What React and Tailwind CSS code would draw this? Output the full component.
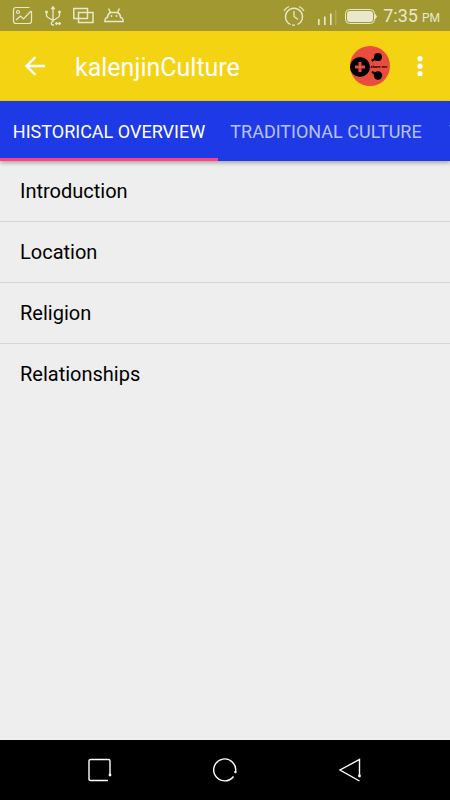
import React from "react";

const topics = ["Introduction", "Location", "Religion", "Relationships"];

function StatusBar() {
  return (
    <div className="flex h-[31px] shrink-0 items-center justify-between bg-[#a19832] pr-2.5 pl-3 text-[#e9e8cb]">
      <div className="flex items-center gap-2.5">
        <svg width="21" height="20" viewBox="0 0 21 20" fill="none" stroke="currentColor" strokeWidth="1.2">
          <path d="M17.500 1.500H4Q1.500 1.500 1.500 4V15Q1.500 17.500 4 17.500H17Q19.500 17.500 19.500 15V5" />
          <circle cx="6" cy="6" r="1.500" />
          <path d="M4 14L8.500 10L11.500 13L19 5" />
        </svg>
        <svg width="20" height="22" viewBox="0 0 20 22" fill="none" stroke="currentColor" strokeWidth="1.3">
          <path d="M10 3V16M3.500 8V10Q3.500 12 5 12.500L10 15.500L15 12.500Q16.500 12 16.500 10V8" />
          <path d="M8 4L10 1L12 4ZM2.500 6H4.500V8H2.500ZM15.500 6H17.500V8H15.500Z" fill="currentColor" strokeWidth="0.6" />
          <path d="M10.500 16.500H9.500Q7 18.500 9.500 20H11M12 18.500H18M13.500 17V20M16.500 17V20" />
        </svg>
        <svg width="21" height="20" viewBox="0 0 21 20" fill="none" stroke="currentColor" strokeWidth="1.500">
          <path d="M.8 2.500H14.500V12.500H.8Z" />
          <path d="M5.500 6.500H20V16.500H5.500Z" />
        </svg>
        <svg width="20" height="20" viewBox="0 0 20 20" fill="none" stroke="currentColor" strokeWidth="1.400">
          <path d="M4.500 2.500L6.500 6.500H13.500L15.500 2.500" />
          <path d="M6.500 6.500Q3.500 8 3.500 11.500Q1 11.500 .8 15.500H19.200Q19 11.500 16.500 11.500Q16.500 8 13.500 6.500" />
          <path d="M7.500 9V11M12.500 9V11" />
        </svg>
      </div>
      <div className="flex items-center">
        <svg className="mr-3" width="22" height="22" viewBox="0 0 22 22" fill="none" stroke="currentColor" strokeWidth="1.3">
          <path d="M7.500 19.500A8.500 8.500 0 1 1 14.500 19.500M9 20.200H12" />
          <path d="M11 6V11.500L15 14.500M1 6Q2.500 3 6 1.500M16 1.500Q19.500 3 21 6" />
        </svg>
        <svg className="mr-2" width="20" height="18" viewBox="0 0 20 18" fill="currentColor">
          <path d="M1 12H2.600V18H1ZM7 9.500H8.600V18H7ZM13 6.500H14.600V18H13Z" />
          <path d="M18 3H19.500V18H18Z" opacity=".25" />
        </svg>
        <svg className="mr-1.5" width="32" height="18" viewBox="0 0 32 18">
          <rect x=".5" y="2.500" width="29" height="14" rx="4" fill="none" stroke="currentColor" />
          <rect x="2" y="4" width="26" height="11" rx="3" fill="currentColor" />
          <path d="M30 6.500L32 9.500L30 12.500Z" fill="currentColor" />
        </svg>
        <span className="flex items-baseline gap-1 text-lg">
          7:35 <span className="text-xs">PM</span>
        </span>
      </div>
    </div>
  );
}

function ShareLogo() {
  return (
    <svg width="40" height="40" viewBox="0 0 40 40">
      <circle cx="20" cy="20" r="20" fill="#e94d3d" />
      <circle cx="10" cy="21" r="10" />
      <path d="M8.500 16H11.500V19.500H15V22.500H11.500V26H8.500V22.500H5V19.500H8.500Z" fill="#e94d3d" />
      <circle cx="28" cy="11" r="4" />
      <path d="M26 8L23.500 12.500L21 14L22.500 15.800L24.500 14.500H30ZM22 25L25 26H30L26 32L23.500 28L21.500 27Z" />
      <circle cx="28" cy="29.500" r="4.200" />
      <text x="20.500" y="21.500" fontFamily="Roboto, sans-serif" fontSize="4" fontWeight="700">
        share me
      </text>
    </svg>
  );
}

function AppBar() {
  return (
    <header className="flex h-[70px] shrink-0 items-center bg-[#f4d313] text-white">
      <button type="button" aria-label="Back" className="flex h-full w-[75px] items-center pl-[25px]">
        <svg width="20" height="20" viewBox="0 0 20 20" fill="none" stroke="currentColor" strokeWidth="2.4">
          <path d="M20 10H2M10.500 1L1.500 10L10.500 19" />
        </svg>
      </button>
      <h1 className="flex-1 pt-1 text-[25px] leading-8">kalenjinCulture</h1>
      <button type="button" aria-label="Share" className="mr-5">
        <ShareLogo />
      </button>
      <button type="button" aria-label="More options" className="mr-5 flex h-10 w-5 items-center justify-center">
        <svg width="6" height="20" viewBox="0 0 6 20" fill="currentColor">
          <circle cx="3" cy="2.700" r="2.600" />
          <circle cx="3" cy="10.200" r="2.600" />
          <circle cx="3" cy="17.700" r="2.600" />
        </svg>
      </button>
    </header>
  );
}

function Tabs() {
  return (
    <div
      role="tablist"
      className="z-10 flex h-[60px] shrink-0 overflow-hidden bg-[#1d3ae6] text-lg whitespace-nowrap text-white/70 shadow-[0_2px_4px_rgba(0,0,0,0.3)]"
    >
      <button type="button" role="tab" aria-selected="true" className="w-[218px] shrink-0 border-b-3 border-[#ff4081] pt-1 text-white">
        HISTORICAL OVERVIEW
      </button>
      <button type="button" role="tab" aria-selected="false" className="w-[216px] shrink-0 pt-0.5">
        TRADITIONAL CULTURE
      </button>
      <button type="button" role="tab" aria-selected="false" className="shrink-0 px-[15px] pt-0.5">
        T
      </button>
    </div>
  );
}

function NavBar() {
  return (
    <nav className="flex h-[60px] shrink-0 items-center justify-center gap-[101px] bg-black text-white">
      <button type="button" aria-label="Recent apps">
        <svg width="24" height="24" viewBox="0 0 24 24" fill="none" stroke="currentColor" strokeWidth="1.4">
          <path d="M20 22.500H2.500Q1 22.500 1 21V3Q1 1.500 2.500 1.500H20.500Q22 1.500 22 3V17" />
          <circle cx="22" cy="17" r="1.400" fill="currentColor" stroke="none" />
        </svg>
      </button>
      <button type="button" aria-label="Home">
        <svg width="24" height="24" viewBox="0 0 24 24" fill="none" stroke="currentColor" strokeWidth="1.4">
          <path d="M22.500 14A11 11 0 1 0 20.500 18.500" />
          <circle cx="22.400" cy="14" r="1.200" fill="currentColor" stroke="none" />
        </svg>
      </button>
      <button type="button" aria-label="Back">
        <svg width="24" height="24" viewBox="0 0 24 24" fill="none" stroke="currentColor" strokeWidth="1.4">
          <path d="M21.500 23L2 12L21.500 1.500V17.500" />
          <circle cx="21.500" cy="18" r="1.400" fill="currentColor" stroke="none" />
        </svg>
      </button>
    </nav>
  );
}

export default function App() {
  return (
    <div className="flex min-h-screen flex-col bg-[#eeeeee] font-[Roboto,sans-serif]">
      <StatusBar />
      <AppBar />
      <Tabs />
      <main className="flex-1">
        <ul className="divide-y divide-[#d6d6d6]">
          {topics.map((topic) => (
            <li key={topic}>
              <button type="button" className="flex h-[60px] w-full items-center px-5 text-left text-xl text-black">
                {topic}
              </button>
            </li>
          ))}
        </ul>
      </main>
      <NavBar />
    </div>
  );
}
